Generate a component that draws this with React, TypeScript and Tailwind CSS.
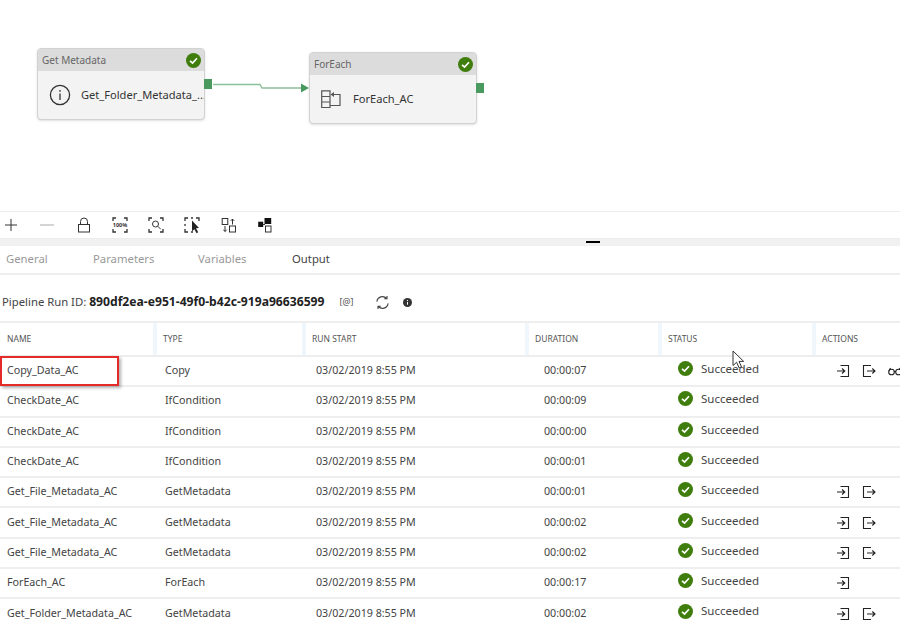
import React from "react";

const GRID = "grid grid-cols-[153px_149px_223px_133px_154px_88px]";

const rows = [
  { name: "Copy_Data_AC", type: "Copy", duration: "00:00:07", actions: 3 },
  { name: "CheckDate_AC", type: "IfCondition", duration: "00:00:09", actions: 0 },
  { name: "CheckDate_AC", type: "IfCondition", duration: "00:00:00", actions: 0 },
  { name: "CheckDate_AC", type: "IfCondition", duration: "00:00:01", actions: 0 },
  { name: "Get_File_Metadata_AC", type: "GetMetadata", duration: "00:00:01", actions: 2 },
  { name: "Get_File_Metadata_AC", type: "GetMetadata", duration: "00:00:02", actions: 2 },
  { name: "Get_File_Metadata_AC", type: "GetMetadata", duration: "00:00:02", actions: 2 },
  { name: "ForEach_AC", type: "ForEach", duration: "00:00:17", actions: 1 },
  { name: "Get_Folder_Metadata_AC", type: "GetMetadata", duration: "00:00:02", actions: 2 },
];

function Check({ size = 15 }: { size?: number }) {
  return (
    <svg width={size} height={size} viewBox="0 0 16 16" className="shrink-0">
      <circle cx="8" cy="8" r="8" fill="#3f7d0c" />
      <path d="M4.3 8.3 7 10.8 11.7 5.6" fill="none" stroke="#fff" strokeWidth="1.8" />
    </svg>
  );
}

function InputIcon() {
  return (
    <svg width="14" height="14" viewBox="0 0 14 14" fill="none" stroke="#222" strokeWidth="1.1" className="shrink-0">
      <path d="M4.5 1.5h8v11h-8M1 7h7.5M6 4.5 8.8 7 6 9.5" />
    </svg>
  );
}

function OutputIcon() {
  return (
    <svg width="14" height="14" viewBox="0 0 14 14" fill="none" stroke="#222" strokeWidth="1.1" className="shrink-0">
      <path d="M9 1.5H1.5v11H9M5 7h8M10.3 4.5 13 7l-2.7 2.5" />
    </svg>
  );
}

function GlassesIcon() {
  return (
    <svg width="14" height="14" viewBox="0 0 14 14" fill="none" stroke="#222" strokeWidth="1.1" className="shrink-0">
      <circle cx="3.5" cy="8" r="2.8" />
      <circle cx="10.5" cy="8" r="2.8" />
      <path d="M6 7.5h2M1 7l1.5-3M13 7l-1.5-3" />
    </svg>
  );
}

function PipelineNode({ title, label, icon, className }: { title: string; label: string; icon: React.ReactNode; className: string }) {
  return (
    <div className={"absolute flex h-[72px] w-[168px] flex-col rounded-sm border border-[#d2d2d2] bg-[#f3f3f3] shadow-sm " + className}>
      <div className="flex h-[22px] items-center justify-between bg-[#dcdcdc] pl-[4px] pr-[3px] text-[10px] text-[#666]">
        {title}
        <Check />
      </div>
      <div className="flex flex-1 items-center overflow-hidden pl-[11px] text-[11.1px] text-[#333]">
        <span className="w-[32px] shrink-0">{icon}</span>
        <span className="whitespace-nowrap">{label}</span>
      </div>
      <div className="absolute left-full top-[30px] h-[10px] w-[8px] bg-[#4a9a5f]" />
    </div>
  );
}

const toolIcon = { width: 18, height: 18, viewBox: "0 0 18 18", fill: "none", stroke: "#333", strokeWidth: 1 };

function Corners() {
  return <path d="M2 5V2h3M13 2h3v3M16 13v3h-3M5 16H2v-3" strokeWidth="1.3" />;
}

function Toolbar() {
  return (
    <div className="flex h-[28px] items-center gap-[18.3px] border-y border-[#ececec] pl-[2px]">
      <svg {...toolIcon}><path d="M9 3v12M3 9h12" /></svg>
      <svg {...toolIcon} stroke="#aaa"><path d="M2 9h14" /></svg>
      <svg {...toolIcon}><rect x="3.5" y="8.5" width="11" height="7.5" /><path d="M5.5 8.5V5.5a3.5 3.5 0 0 1 7 0v3" /></svg>
      <svg {...toolIcon}>
        <Corners />
        <text x="9" y="11" textAnchor="middle" fontSize="5.5" fontWeight="700" fill="#333" stroke="none">100%</text>
      </svg>
      <svg {...toolIcon}><Corners /><circle cx="8.5" cy="8" r="3" /><path d="m10.7 10.2 3 3" /></svg>
      <svg {...toolIcon}>
        <path d="M2 5V2h3M8 2h2M2 8v2M2 13v3h3M8 16h2M13 2h3v3" strokeWidth="1.3" />
        <path d="M9 4.5 16 12l-3 .3 2.2 4-1.6.9-2.2-4-2.4 2.1z" fill="#222" stroke="none" />
      </svg>
      <svg {...toolIcon}>
        <rect x="2.2" y="2.5" width="5.6" height="6" />
        <rect x="9.5" y="10" width="6" height="6" />
        <path d="M12.5 8.5V3M10.8 4.8 12.5 3l1.7 1.8M5 10v5.5M3.3 13.7 5 15.5l1.7-1.8" />
      </svg>
      <svg {...toolIcon}>
        <rect x="2.2" y="5.7" width="5" height="5.3" fill="#111" stroke="none" />
        <rect x="8.5" y="2" width="6.7" height="6" fill="#111" stroke="none" />
        <rect x="9.5" y="10" width="5.5" height="6" />
        <path d="M7 8.5h2" />
      </svg>
    </div>
  );
}

export default function App() {
  return (
    <div className="h-[620px] w-[900px] overflow-hidden bg-white font-['Noto_Sans',sans-serif] text-[#444]">
      <div className="relative h-[211px]">
        <PipelineNode
          title="Get Metadata"
          label="Get_Folder_Metadata_..."
          className="left-[37px] top-[48px]"
          icon={
            <svg width="22" height="22" viewBox="0 0 22 22" fill="none" stroke="#333" strokeWidth="1.3">
              <circle cx="11" cy="11" r="9.6" />
              <path d="M11 9.5v6.5M11 6v1.8" />
            </svg>
          }
        />
        <PipelineNode
          title="ForEach"
          label="ForEach_AC"
          className="left-[309px] top-[52px]"
          icon={
            <svg width="20" height="20" viewBox="0 0 20 20" fill="none" stroke="#555" strokeWidth="1.2">
              <path d="M.7 1.8H9v16.7H.7zM.7 7.5H9M.7 13H9M9 16.5h10V5.5H11" />
              <path d="M9.5 5.5 13 3v5z" fill="#555" stroke="none" />
            </svg>
          }
        />
        <svg width="100" height="14" viewBox="0 0 100 14" fill="none" className="absolute left-[213px] top-[80px]">
          <path d="M0 4.5h47l2 3.5h41" stroke="#8cc09b" strokeWidth="1.4" />
          <path d="M88 3.5l8 4.5-8 4.5z" fill="#4a9a5f" />
        </svg>
      </div>

      <Toolbar />

      <div className="relative h-[7px] bg-[#f1f1f1]">
        <div className="absolute left-[586px] top-[2px] h-[2px] w-[14px] bg-black" />
      </div>

      <div className="flex h-[29px] items-center border-b-2 border-[#eeeeee] pl-[6px] text-[11.3px] text-[#999]">
        <span className="w-[87px]">General</span>
        <span className="w-[105px]">Parameters</span>
        <span className="w-[94px]">Variables</span>
        <span className="text-[#444]">Output</span>
      </div>

      <div className="flex h-[46px] items-center pl-[2px] pt-[8px] text-[11.3px] text-[#444]">
        <span>Pipeline Run ID:&nbsp;</span>
        <span className="text-[12.15px] font-bold text-[#222]">890df2ea-e951-49f0-b42c-919a96636599</span>
        <span className="ml-[15px] w-[36px] text-[9px] text-[#555]">[@]</span>
        <svg width="15" height="15" viewBox="0 0 16 16" fill="none" stroke="#444" strokeWidth="1.2" className="mr-[13px]">
          <path d="M2 7a6 6 0 0 1 10.5-3.2M14 9a6 6 0 0 1-10.5 3.2M12.8 1v3h-3M3.2 15v-3h3" />
        </svg>
        <svg width="9" height="9" viewBox="0 0 10 10">
          <circle cx="5" cy="5" r="5" fill="#333" />
          <path d="M5 4.5v3M5 2.2v1.2" stroke="#fff" strokeWidth="1.1" />
        </svg>
      </div>

      <div className={GRID + " h-[36px] border-y-2 border-[#eeeeee] text-[8.5px] uppercase text-[#555]"}>
        {["Name", "Type", "Run Start", "Duration", "Status", "Actions"].map((h, i) => (
          <div key={h} className={i === 0 ? "flex items-center pl-[7px] pt-[1px]" : "flex items-center border-l-4 border-[#eff6fc] pl-[6px] pt-[1px]"}>
            {h}
          </div>
        ))}
      </div>

      <div className="relative">
        {rows.map((r, i) => (
          <div key={i} className={GRID + " h-[30.3px] items-center border-b-2 border-[#eeeeee] pb-[2px] text-[10.7px] text-[#444]"}>
            <div className="whitespace-nowrap pl-[7px]">{r.name}</div>
            <div className="pl-[12px]">{r.type}</div>
            <div className="pl-[14px]">03/02/2019 8:55 PM</div>
            <div className="pl-[19px]">{r.duration}</div>
            <div className="flex items-center gap-[8px] pb-[3px] pl-[20px]">
              <Check />
              <span className="text-[11.5px]">Succeeded</span>
            </div>
            <div className="flex gap-[12px] overflow-hidden pl-[24px] pt-[2px]">
              {r.actions > 0 && <InputIcon />}
              {r.actions > 1 && <OutputIcon />}
              {r.actions > 2 && <GlassesIcon />}
            </div>
          </div>
        ))}
        <div className="absolute left-0 top-[-1px] h-[30px] w-[119px] border-2 border-[#e52a2a] shadow-[2px_2px_3px_rgba(0,0,0,0.3)]" />
      </div>

      <svg width="13" height="19" viewBox="0 0 13 19" className="absolute left-[732px] top-[350px]">
        <path d="M1 1v14.5l3.6-3.2 2.5 5.5 2.4-1-2.5-5.4h4.7z" fill="#fff" stroke="#333" strokeWidth="1" />
      </svg>
    </div>
  );
}
